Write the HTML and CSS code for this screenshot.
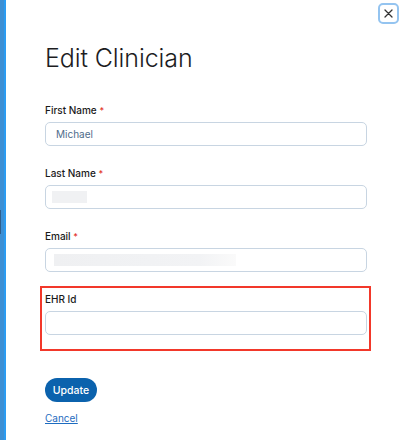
FILE: index.html
```html
<!DOCTYPE html>
<html lang="en">
<head>
<meta charset="utf-8">
<title>Edit Clinician</title>
<link rel="stylesheet" href="styles.css">
</head>
<body>
<div class="page">
  <div class="stripe"><span class="stripe-mark"></span></div>
  <main class="modal">
    <div class="topbar">
      <button class="close" type="button" aria-label="Close">
        <svg width="9" height="9" viewBox="0 0 9 9" aria-hidden="true">
          <path d="M1 1L8 8M8 1L1 8" stroke="#333" stroke-width="1.3" stroke-linecap="round" fill="none"/>
        </svg>
      </button>
    </div>
    <h1 class="title">Edit Clinician</h1>
    <form class="form">
      <div class="field">
        <label class="label">First Name <span class="req">*</span></label>
        <div class="input"><span class="value">Michael</span></div>
      </div>
      <div class="field">
        <label class="label">Last Name <span class="req">*</span></label>
        <div class="input"><span class="blur blur-short"></span></div>
      </div>
      <div class="field">
        <label class="label">Email <span class="req">*</span></label>
        <div class="input"><span class="blur blur-long"></span></div>
      </div>
      <div class="highlight">
        <div class="field field-last">
          <label class="label">EHR Id</label>
          <div class="input"></div>
        </div>
      </div>
      <button class="update" type="button">Update</button>
      <a class="cancel" href="#">Cancel</a>
    </form>
  </main>
</div>
</body>
</html>
```
FILE: styles.css
```css
html, body {
  margin: 0;
  padding: 0;
  background: #ffffff;
}

body {
  font-family: Inter, "Liberation Sans", sans-serif;
  color: #1a1a1a;
}

.page {
  display: flex;
  min-height: 440px;
}

.stripe {
  width: 6px;
  flex: 0 0 6px;
  background: linear-gradient(90deg, #3d8fd4 0 4px, #2b9cf2 4px 6px);
}

.stripe-mark {
  display: block;
  width: 1px;
  height: 24px;
  margin-top: 210px;
  background: #2e5e8c;
}

.modal {
  flex: 1;
  padding: 0 1px 0 39px;
}

.topbar {
  display: flex;
  justify-content: flex-end;
  padding-top: 3px;
}

.close {
  width: 21px;
  height: 21px;
  box-sizing: border-box;
  border: 2px solid #94c4f0;
  border-radius: 5px;
  background: #ffffff;
  padding: 0;
  display: flex;
  align-items: center;
  justify-content: center;
}

.title {
  margin: 19px 0 0;
  font-size: 25px;
  line-height: 30px;
  font-weight: 300;
  color: #1d1d1f;
  letter-spacing: -0.1px;
}

.form {
  margin-top: 30px;
  width: 322px;
}

.field {
  margin-bottom: 20px;
}

.field-last {
  margin-bottom: 0;
}

.label {
  display: block;
  height: 14px;
  font-size: 10px;
  line-height: 14px;
  font-weight: 500;
  color: #1a1a1a;
  margin-bottom: 5px;
}

.req {
  color: #e2332b;
  font-size: 9px;
  line-height: 1;
}

.input {
  box-sizing: border-box;
  height: 24px;
  border: 1px solid #c8d5e2;
  border-radius: 5px;
  display: flex;
  align-items: center;
  padding: 0 10px;
  background: #ffffff;
}

.value {
  font-size: 10px;
  color: #4f6c8a;
}

.blur {
  display: block;
  height: 12px;
  background: #f0f1f3;
}

.blur-short {
  width: 35px;
  margin-left: -4px;
}

.blur-long {
  width: 182px;
  margin-left: -2px;
  background: linear-gradient(90deg, #eff0f2 0, #f2f3f5 80%, #fafafa 100%);
}

.highlight {
  margin: -6px -4px 0 -5px;
  padding: 4px 2px 14px 3px;
  border: 2px solid #f2382a;
}

.update {
  display: block;
  margin-top: 27px;
  width: 52px;
  height: 24px;
  border: none;
  border-radius: 12px;
  background: #0b62ad;
  color: #ffffff;
  font-family: Inter, "Liberation Sans", sans-serif;
  font-size: 10.5px;
  font-weight: 500;
  padding: 0;
}

.cancel {
  display: inline-block;
  margin-top: 9px;
  font-size: 10px;
  line-height: 14px;
  color: #1d6cc0;
  text-decoration: underline;
}
```
